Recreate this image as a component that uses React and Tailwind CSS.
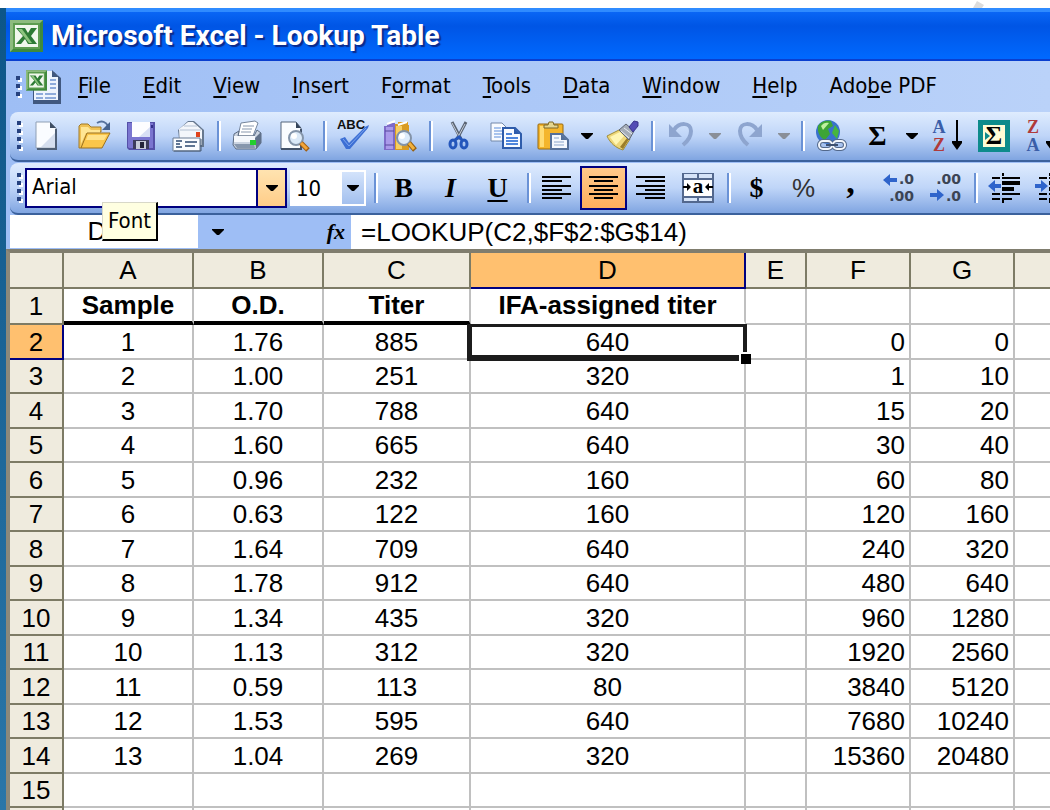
import React from 'react';
import clsx from 'clsx';

const menus = [
    ['', 'F', 'ile'],
    ['', 'E', 'dit'],
    ['', 'V', 'iew'],
    ['', 'I', 'nsert'],
    ['F', 'o', 'rmat'],
    ['', 'T', 'ools'],
    ['', 'D', 'ata'],
    ['', 'W', 'indow'],
    ['', 'H', 'elp'],
    ['Ado', 'b', 'e PDF'],
];

const columns = [
    { id: 'A', width: 'w-[130px]' },
    { id: 'B', width: 'w-[130px]' },
    { id: 'C', width: 'w-[147px]' },
    { id: 'D', width: 'w-[275px]' },
    { id: 'E', width: 'w-[61px]' },
    { id: 'F', width: 'w-[104px]' },
    { id: 'G', width: 'w-[104px]' },
    { id: '', width: '' },
];

const rows = [
    ['Sample', 'O.D.', 'Titer', 'IFA-assigned titer', '', '', '', ''],
    ['1', '1.76', '885', '640', '', '0', '0', ''],
    ['2', '1.00', '251', '320', '', '1', '10', ''],
    ['3', '1.70', '788', '640', '', '15', '20', ''],
    ['4', '1.60', '665', '640', '', '30', '40', ''],
    ['5', '0.96', '232', '160', '', '60', '80', ''],
    ['6', '0.63', '122', '160', '', '120', '160', ''],
    ['7', '1.64', '709', '640', '', '240', '320', ''],
    ['8', '1.78', '912', '640', '', '480', '640', ''],
    ['9', '1.34', '435', '320', '', '960', '1280', ''],
    ['10', '1.13', '312', '320', '', '1920', '2560', ''],
    ['11', '0.59', '113', '80', '', '3840', '5120', ''],
    ['12', '1.53', '595', '640', '', '7680', '10240', ''],
    ['13', '1.04', '269', '320', '', '15360', '20480', ''],
    ['', '', '', '', '', '', '', ''],
    ['', '', '', '', '', '', '', ''],
];

const Icon = ({ children }) => (
    <svg viewBox="0 0 32 32" className="h-8 w-8 shrink-0 overflow-visible" fill="none" aria-hidden="true">
        {children}
    </svg>
);

const Caret = ({ color = '#000' }) => (
    <svg viewBox="0 0 12 6" className="h-[6px] w-3 shrink-0" aria-hidden="true">
        <path d="M0 0h12v1L7 6H5L0 1z" fill={color} />
    </svg>
);

// The X mark shared by the title bar and workbook icons
const ExcelMark = () => (
    <>
        <rect width="33" height="32" fill="#3f8a3c" />
        <path d="M0 0h33l-3 3H3v26l-3 3z" fill="#8dbb7e" />
        <rect x="3" y="3" width="27" height="26" fill="#5d9c50" />
        <rect x="5" y="5" width="23" height="22" fill="#f0f7ec" />
        <path d="M6 8h9l3 5 3-5h6l-6 8 6 8h-9l-3-5-4 5H6l7-8z" fill="#2d7a35" />
        <path d="M8 9h4l10 14h-3z" fill="#8cc47e" />
    </>
);

const NewIcon = () => (
    <Icon>
        <path d="M6 3h14l6 6v21H6z" fill="#55657a" />
        <path d="M5 2h14l6 6v20H5z" fill="#fafcff" stroke="#8f9fb5" />
        <path d="M19 2l6 6h-6z" fill="#3f4e63" />
        <path d="M10 27l14-14v14z" fill="#d5deee" />
        <path d="M25 9v20H6" stroke="#4e5e75" strokeWidth="2" />
    </Icon>
);

const OpenIcon = () => (
    <Icon>
        <path d="M1 28V6l2-2h7l3 3h10v5h-3L3 28z" fill="#f0c256" stroke="#a17a28" />
        <path d="M3 7h7l3 3h9v3H8L3 24z" fill="#ffe694" />
        <path d="M9 13h23l-8 15H3z" fill="#fbc64a" stroke="#9b711f" />
        <path d="M10 15h19l-3 5H8z" fill="#ffe28a" />
        <path d="M19 3c5-3 9-1 11 3" stroke="#55719d" strokeWidth="2" />
        <path d="M32 2v8h-8z" fill="#45628f" />
    </Icon>
);

const SaveIcon = () => (
    <Icon>
        <path d="M2 2h28v28H4l-2-2z" fill="#5450a8" />
        <path d="M3 3h25v25H4l-1-1z" fill="#7a75d0" />
        <path d="M7 2h18v15H7z" fill="#fdfdff" />
        <path d="M14 17L25 7v10z" fill="#d8dff5" />
        <rect x="8" y="20" width="16" height="9" fill="#3d3b5c" />
        <rect x="11" y="21" width="10" height="8" fill="#c7cad8" />
        <rect x="15" y="22" width="4" height="6" fill="#24233a" />
        <rect x="26" y="5" width="2" height="3" fill="#34308a" />
    </Icon>
);

const MailIcon = () => (
    <Icon>
        <path d="M6 10L16 1h6l10 9v17H8z" fill="#66788f" />
        <path d="M7 9l9-7h5l9 8v15H8z" fill="#f3f6fb" />
        <path d="M8 10h21M12 6h13" stroke="#b4c1d3" />
        <rect x="24" y="12" width="4" height="5" fill="#e0431c" />
        <path d="M1 18h27v13H1z" fill="#fafcff" stroke="#6a7c95" />
        <path d="M4 21h6M4 24h4M4 27h6M13 22h12M13 26h10" stroke="#5f7594" strokeWidth="2" />
        <path d="M2 31h27V19" stroke="#465a74" />
    </Icon>
);

const PrintIcon = () => (
    <Icon>
        <path d="M10 3l14-2 3 2-5 13H7z" fill="#fff" stroke="#75859b" />
        <path d="M12 6h11M11 9h10M10 12h10" stroke="#8797ad" />
        <path d="M3 14l5-3-1 5h16l3-6 4 3v10l-5 6H5l-3-4z" fill="#cbd4e1" stroke="#5c6c82" />
        <path d="M3 16h21v6H3z" fill="#f5f8fc" />
        <path d="M3 24h20l1 4H6z" fill="#8797ad" />
        <path d="M24 18l6-6v11l-5 6z" fill="#60718a" />
        <rect x="19" y="20" width="6" height="5" fill="#22ce2d" />
    </Icon>
);

const PreviewIcon = () => (
    <Icon>
        <path d="M3 2h15l5 6v21H3z" fill="#fafcff" stroke="#54657d" />
        <path d="M18 2l5 6h-5z" fill="#35445a" />
        <path d="M3 29h20V9" stroke="#44536a" strokeWidth="2" />
        <circle cx="18" cy="18" r="7" fill="#dbe9f8" stroke="#8595aa" strokeWidth="2" />
        <circle cx="16" cy="16" r="3" fill="#fff" />
        <path d="M23 23l7 7" stroke="#a15f13" strokeWidth="5" />
        <path d="M23 23l6 6" stroke="#f2a43a" strokeWidth="3" />
    </Icon>
);

const SpellingIcon = () => (
    <Icon>
        <text x="14" y="9" textAnchor="middle" fontFamily="Liberation Sans" fontSize="13" fontWeight="700" fill="#111">ABC</text>
        <path d="M3 19l5-2 4 6L28 7l4-2-1 3-18 21h-4z" fill="#3d6fd4" />
        <path d="M6 19l6 7L29 8" stroke="#7ca4ee" strokeWidth="1" />
    </Icon>
);

const ResearchIcon = () => (
    <Icon>
        <path d="M0 6h3V3h8v27H0z" fill="#7e6bc8" />
        <path d="M2 7h7v22H2z" fill="#aa9aea" />
        <path d="M1 11h9M1 25h9" stroke="#594a9d" />
        <path d="M11 4h3V2h10v3h1v25H11z" fill="#d99b22" />
        <path d="M12 6h6v23h-6z" fill="#f7ce62" />
        <path d="M3 4l8-3M14 5l9-3" stroke="#fff" strokeWidth="2" />
        <circle cx="20" cy="18" r="7" fill="#ddebfa" stroke="#8393a8" strokeWidth="2" />
        <circle cx="18" cy="16" r="3" fill="#fff" />
        <path d="M25 23l6 7" stroke="#96600f" strokeWidth="5" />
        <path d="M25 23l5 6" stroke="#f2b13d" strokeWidth="3" />
    </Icon>
);

const CutIcon = () => (
    <Icon>
        <path d="M9 2l9 17M23 2l-9 17" stroke="#5a6473" strokeWidth="3" />
        <path d="M9 3l8 15M22 4l-7 13" stroke="#c4ccd8" strokeWidth="1" />
        <ellipse cx="10" cy="24" rx="3" ry="4" stroke="#2456bb" strokeWidth="3" />
        <ellipse cx="21" cy="24" rx="3" ry="4" stroke="#2456bb" strokeWidth="3" />
        <path d="M12 20l4-3 3 3" stroke="#2456bb" strokeWidth="3" />
    </Icon>
);

const CopyIcon = () => (
    <Icon>
        <path d="M1 3h11l4 4v14H1z" fill="#f8fbff" stroke="#7388aa" />
        <path d="M4 8h7M4 11h9M4 14h9M4 17h7" stroke="#5b8ddb" />
        <path d="M13 8h12l6 6v14H13z" fill="#f8fbff" stroke="#2e5cab" strokeWidth="2" />
        <path d="M24 8v6h6z" fill="#2e5cab" />
        <path d="M16 14h6M16 18h12M16 21h12M16 24h12" stroke="#4f86dc" strokeWidth="2" />
    </Icon>
);

const PasteIcon = () => (
    <Icon>
        <rect x="1" y="4" width="25" height="25" rx="1" fill="#f4b52c" stroke="#97690f" />
        <path d="M3 6h4v21H3z" fill="#ffdb72" />
        <path d="M7 8V5h4l1-3h4l1 3h4v3z" fill="#e5d68f" stroke="#7d692c" />
        <path d="M14 14h11l6 6v9H14z" fill="#f4f8fd" stroke="#54709a" strokeWidth="2" />
        <path d="M24 14v6h6z" fill="#54709a" />
        <path d="M17 18h5M17 22h10M17 25h10" stroke="#8aa5cb" />
    </Icon>
);

const BrushIcon = () => (
    <Icon>
        <path d="M1 16l12-6 11 9-7 11C10 28 4 23 1 16z" fill="#eed77a" stroke="#a18d38" />
        <path d="M4 17l10-5 4 4-8 9z" fill="#fff6b4" />
        <path d="M17 29l-3-2 7-9 2 1z" fill="#9b7d28" />
        <path d="M13 10l7-6 8 7-5 9z" fill="#a5adb8" stroke="#5d6673" />
        <path d="M15 11l8 7M18 8l8 6" stroke="#e8ecf2" />
        <path d="M23 7l5-6 4 1v4l-5 6z" fill="#524cb5" stroke="#37338a" />
    </Icon>
);

const UndoIcon = ({ flip }) => (
    <svg viewBox="0 0 32 32" className={clsx('h-8 w-8 shrink-0', flip && '-scale-x-100')} fill="none" aria-hidden="true">
        <path d="M9 10c5-8 17-8 17 1 0 5-3 10-8 14" stroke="#8ea5cf" strokeWidth="4" />
        <path d="M4 4v13h13z" fill="#8ea5cf" />
    </svg>
);

const LinkIcon = () => (
    <Icon>
        <circle cx="13" cy="12" r="12" fill="#3a72cc" />
        <path d="M3 6c3-5 8-6 13-5l2 5-5 3 2 5-5 6c-5-2-8-8-7-14z" fill="#3da436" />
        <path d="M20 5l4 6-2 8-5-6z" fill="#47b63d" />
        <path d="M6 6c2-3 5-4 8-3l-6 7z" fill="#c0f0a0" />
        <rect x="4" y="21" width="13" height="8" rx="4" stroke="#53688a" strokeWidth="4" />
        <rect x="18" y="21" width="12" height="8" rx="4" stroke="#53688a" strokeWidth="4" />
        <rect x="4" y="21" width="13" height="8" rx="4" stroke="#f2f6fc" strokeWidth="2" />
        <rect x="18" y="21" width="12" height="8" rx="4" stroke="#f2f6fc" strokeWidth="2" />
        <path d="M11 25h12" stroke="#3d5070" strokeWidth="2" />
    </Icon>
);

const SortIcon = ({ first, second, firstColor, secondColor }) => (
    <Icon>
        <text x="8" y="13" textAnchor="middle" fontFamily="Liberation Serif" fontSize="18" fontWeight="700" fill={firstColor}>{first}</text>
        <text x="8" y="31" textAnchor="middle" fontFamily="Liberation Serif" fontSize="18" fontWeight="700" fill={secondColor}>{second}</text>
        <path d="M26 0v26" stroke="#000" strokeWidth="2" />
        <path d="M21 21h10v2l-5 7-5-7z" fill="#000" />
    </Icon>
);

const SubtotalIcon = () => (
    <Icon>
        <rect width="32" height="32" fill="#0d8b8b" />
        <rect x="5" y="5" width="22" height="22" fill="#fffbd5" />
        <text x="16" y="24" textAnchor="middle" fontFamily="Liberation Serif" fontSize="25" fontWeight="700" fill="#000">Σ</text>
        <path d="M7 12l5 4-5 4z" fill="#0d8b8b" />
    </Icon>
);

const AlignIcon = ({ d }) => (
    <Icon>
        <path d={d} stroke="#000" strokeWidth="2" />
    </Icon>
);

const MergeIcon = () => (
    <Icon>
        <rect x="0" y="1" width="32" height="30" fill="#53688e" />
        <path d="M2 2h13v4H2zM17 2h13v4H17zM2 26h13v3H2zM17 26h13v3H17z" fill="#d5e3f8" />
        <rect x="2" y="8" width="28" height="16" fill="#fff" />
        <text x="16" y="21" textAnchor="middle" fontFamily="Liberation Serif" fontSize="21" fontWeight="700" fill="#000">a</text>
        <path d="M1 15h7M24 15h7" stroke="#000" strokeWidth="2" />
        <path d="M5 11l4 4-4 4zM27 11l-4 4 4 4z" fill="#000" />
    </Icon>
);

const DecimalIcon = ({ increase }) => (
    <Icon>
        <text x="32" y="12" textAnchor="end" fontFamily="DejaVu Sans" fontSize="14" fontWeight="700" fill="#3b4454">{increase ? '.0' : '.00'}</text>
        <text x="32" y="29" textAnchor="end" fontFamily="DejaVu Sans" fontSize="14" fontWeight="700" fill="#3b4454">{increase ? '.00' : '.0'}</text>
        <path d={increase ? 'M1 8l7-6v4h7v4H8v4z' : 'M15 23l-7-6v4H1v4h7v4z'} fill="#2f64cb" />
    </Icon>
);

const IndentIcon = ({ increase }) => (
    <Icon>
        <path d="M4 6h8M4 22h8M4 27h8M15 1v3M15 28v3" stroke="#000" strokeWidth="2" />
        <path d="M14 6h18M14 22h18M14 27h10" stroke="#000" strokeWidth="2" />
        <path d="M14 11h18M14 17h12" stroke="#000" strokeWidth="4" />
        <path d={increase ? 'M13 14L6 8v4H0v4h6v4z' : 'M0 14l7-6v4h6v4H7v4z'} fill="#2f64cb" />
    </Icon>
);

const Grip = () => (
    <svg viewBox="0 0 6 32" className="h-8 w-[6px] shrink-0" aria-hidden="true">
        <path d="M2 3h4v4H2zM2 11h4v4H2zM2 19h4v4H2zM2 27h4v4H2z" fill="#fff" />
        <path d="M0 1h4v4H0zM0 9h4v4H0zM0 17h4v4H0zM0 25h4v4H0z" fill="#27427f" />
    </svg>
);

const Separator = () => (
    <div className="flex w-3 shrink-0 justify-center pl-1">
        <div className="h-[30px] w-1 border-r-2 border-l-2 border-r-white border-l-[#6a92d6]" />
    </div>
);

const ToolButton = ({ label, active, children }) => (
    <button
        type="button"
        aria-label={label}
        className={clsx(
            'flex w-[47px] shrink-0 items-center justify-center',
            active ? 'h-11 border-2 border-[#000080] bg-linear-to-b from-[#ffc98a] to-[#ffae5c]' : 'h-10'
        )}
    >
        {children}
    </button>
);

const CaretButton = ({ label, color }) => (
    <button type="button" aria-label={label} className="flex h-10 w-[22px] shrink-0 items-center justify-center">
        <Caret color={color} />
    </button>
);

const StandardToolbar = () => (
    <div className="ml-1 flex h-[50px] items-center overflow-hidden rounded-l-lg border-b-2 border-[#3b619c] bg-linear-to-b from-[#dfecfe] via-[#bfd5f8] to-[#80a5e1] pl-[7px]">
        <div className="flex w-[6px] shrink-0"><Grip /></div>
        <ToolButton label="New"><NewIcon /></ToolButton>
        <ToolButton label="Open"><OpenIcon /></ToolButton>
        <ToolButton label="Save"><SaveIcon /></ToolButton>
        <ToolButton label="E-mail"><MailIcon /></ToolButton>
        <Separator />
        <ToolButton label="Print"><PrintIcon /></ToolButton>
        <ToolButton label="Print Preview"><PreviewIcon /></ToolButton>
        <Separator />
        <ToolButton label="Spelling"><SpellingIcon /></ToolButton>
        <ToolButton label="Research"><ResearchIcon /></ToolButton>
        <Separator />
        <ToolButton label="Cut"><CutIcon /></ToolButton>
        <ToolButton label="Copy"><CopyIcon /></ToolButton>
        <ToolButton label="Paste"><PasteIcon /></ToolButton>
        <CaretButton label="Paste options" />
        <ToolButton label="Format Painter"><BrushIcon /></ToolButton>
        <Separator />
        <ToolButton label="Undo"><UndoIcon /></ToolButton>
        <CaretButton label="Undo history" color="#8a8f98" />
        <ToolButton label="Redo"><UndoIcon flip /></ToolButton>
        <CaretButton label="Redo history" color="#8a8f98" />
        <Separator />
        <ToolButton label="Insert Hyperlink"><LinkIcon /></ToolButton>
        <ToolButton label="AutoSum"><span className="font-['Liberation_Serif',serif] text-[28px] leading-8 font-bold">Σ</span></ToolButton>
        <CaretButton label="AutoSum options" />
        <ToolButton label="Sort Ascending"><SortIcon first="A" second="Z" firstColor="#3a5ea8" secondColor="#b03a3a" /></ToolButton>
        <ToolButton label="Subtotals"><SubtotalIcon /></ToolButton>
        <ToolButton label="Sort Descending"><SortIcon first="Z" second="A" firstColor="#b03a3a" secondColor="#3a5ea8" /></ToolButton>
    </div>
);

const FormattingToolbar = () => (
    <div className="mt-px ml-1 flex h-[52px] items-center rounded-l-lg border-b-2 border-[#3b619c] bg-linear-to-b from-[#dfecfe] via-[#bfd5f8] to-[#80a5e1] pl-[7px]">
        <div className="flex w-2 shrink-0"><Grip /></div>
        <div className="relative flex h-10 w-[262px] shrink-0 border-2 border-[#000080] bg-white">
            <select aria-label="Font" className="min-w-0 flex-1 appearance-none pb-1 pl-[5px] text-[22px] outline-none">
                <option>Arial</option>
            </select>
            <div className="pointer-events-none flex w-[29px] items-center justify-center border-l-2 border-[#000080] bg-linear-to-b from-[#ffe3b0] to-[#ffcd88]">
                <Caret />
            </div>
            <div role="tooltip" className="absolute top-8 left-[75px] z-20 border-t border-r-2 border-b-2 border-l border-t-[#d8d8c8] border-r-black border-b-black border-l-[#d8d8c8] bg-[#ffffe1] px-[5px] text-[22px] leading-9">
                Font
            </div>
        </div>
        <div className="mr-0.5 ml-[3px] flex h-9 w-[76px] shrink-0 border-2 border-white bg-white">
            <select aria-label="Font Size" className="min-w-0 flex-1 appearance-none pb-1 pl-1 text-[22px] outline-none">
                <option>10</option>
            </select>
            <div className="pointer-events-none flex w-[22px] items-center justify-center bg-linear-to-b from-[#d3e3fb] to-[#a3c0ee]">
                <Caret />
            </div>
        </div>
        <Separator />
        <ToolButton label="Bold"><span className="font-['Liberation_Serif',serif] text-[28px] leading-8 font-bold">B</span></ToolButton>
        <ToolButton label="Italic"><span className="font-['Liberation_Serif',serif] text-[28px] leading-8 font-bold italic">I</span></ToolButton>
        <ToolButton label="Underline"><span className="font-['Liberation_Serif',serif] text-[28px] leading-8 font-bold underline decoration-2 underline-offset-3">U</span></ToolButton>
        <Separator />
        <ToolButton label="Align Left"><AlignIcon d="M1 5h29M1 9h20M1 14h29M1 18h20M1 22h29M1 26h20" /></ToolButton>
        <ToolButton label="Center" active><AlignIcon d="M1 5h29M6 9h19M1 14h29M6 18h19M1 22h29M6 26h19" /></ToolButton>
        <ToolButton label="Align Right"><AlignIcon d="M1 5h29M10 9h20M1 14h29M10 18h20M1 22h29M10 26h20" /></ToolButton>
        <ToolButton label="Merge and Center"><MergeIcon /></ToolButton>
        <Separator />
        <ToolButton label="Currency Style"><span className="font-['Liberation_Serif',serif] text-[28px] leading-8 font-bold">$</span></ToolButton>
        <ToolButton label="Percent Style"><span className="font-['Liberation_Sans',sans-serif] text-[26px] leading-8 text-[#333]">%</span></ToolButton>
        <ToolButton label="Comma Style"><span className="pb-3 font-['Liberation_Serif',serif] text-[34px] leading-8 font-bold">,</span></ToolButton>
        <ToolButton label="Increase Decimal"><DecimalIcon increase /></ToolButton>
        <ToolButton label="Decrease Decimal"><DecimalIcon /></ToolButton>
        <Separator />
        <ToolButton label="Decrease Indent"><IndentIcon /></ToolButton>
        <ToolButton label="Increase Indent"><IndentIcon increase /></ToolButton>
    </div>
);

const FormulaBar = () => (
    <div className="ml-1 flex h-[34px] font-['Liberation_Sans',Arial,sans-serif] text-[26px]">
        <input aria-label="Name Box" defaultValue="D2" className="mb-px w-[188px] shrink-0 bg-white text-center outline-none" />
        <button type="button" aria-label="Name list" className="flex w-10 shrink-0 items-center justify-center">
            <Caret />
        </button>
        <div className="flex w-[113px] shrink-0 items-center justify-end pr-[6px]">
            <button type="button" aria-label="Insert Function" className="font-['Liberation_Serif',serif] text-[22px] leading-8 font-bold italic">fx</button>
        </div>
        <input aria-label="Formula" defaultValue="=LOOKUP(C2,$F$2:$G$14)" className="min-w-0 flex-1 bg-white pl-[10px] outline-none" />
    </div>
);

const SelectionFrame = () => (
    <>
        <div className="pointer-events-none absolute -top-px -right-[3px] -bottom-[3px] -left-1 border-t-3 border-r-4 border-b-6 border-l-5 border-[#1c1c1c]" />
        <div className="pointer-events-none absolute -right-[7px] -bottom-[6px] h-3 w-3 border-t-2 border-l-2 border-white bg-black" />
    </>
);

const Sheet = () => (
    <div className="border-t-4 border-l-4 border-t-[#807d6e] border-l-[#8b887a] bg-white">
        <table className="w-full table-fixed border-separate border-spacing-0 font-['Liberation_Sans',Arial,sans-serif] text-[26px] leading-8">
            <thead>
                <tr className="h-9">
                    <th className="w-[54px] border-r-2 border-b-2 border-[#7d7b65] bg-[#efebde] p-0" />
                    {columns.map((col, i) => (
                        <th
                            key={i}
                            scope="col"
                            className={clsx(
                                'border-r-2 border-b-2 p-0 text-center font-normal last:border-r-0',
                                col.width,
                                col.id === 'D' ? 'border-[#000080] bg-[#ffc06f]' : 'border-[#7d7b65] bg-[#efebde]'
                            )}
                        >
                            {col.id}
                        </th>
                    ))}
                </tr>
            </thead>
            <tbody>
                {rows.map((row, r) => (
                    <tr key={r} className="h-[34px] first:h-9 even:h-[35px]">
                        <th
                            scope="row"
                            className={clsx(
                                'border-r-2 border-b-2 p-0 text-center font-normal',
                                r === 1 ? 'border-[#000080] bg-[#ffc06f]' : 'border-[#7d7b65] bg-[#efebde]'
                            )}
                        >
                            {r + 1}
                        </th>
                        {row.map((value, c) => (
                            <td
                                key={c}
                                className={clsx(
                                    'border-r-2 border-r-[#c0c0c0] py-0 last:border-r-0',
                                    r === 0 && 'font-bold',
                                    r === 0 && c < 4 ? 'border-b-4' : 'border-b-2',
                                    r === 0 && c < 3 && 'border-b-black',
                                    r === 0 && c === 3 && 'border-b-white',
                                    (r > 0 || c > 3) && 'border-b-[#c0c0c0]',
                                    c > 4 ? 'pr-1 pl-0 text-right' : 'px-0 text-center',
                                    r === 1 && c === 3 && 'relative z-10'
                                )}
                            >
                                {value}
                                {r === 1 && c === 3 && <SelectionFrame />}
                            </td>
                        ))}
                    </tr>
                ))}
            </tbody>
        </table>
    </div>
);

export default function App() {
    return (
        <div className="flex h-screen flex-col overflow-hidden bg-white font-['DejaVu_Sans_Condensed','DejaVu_Sans',sans-serif] text-black">
            <div className="flex h-2 shrink-0 justify-end pr-[66px]">
                <svg viewBox="0 0 12 8" className="h-2 w-3" aria-hidden="true">
                    <path d="M5 1l7 4-2 3H1z" fill="#dcdcdc" />
                </svg>
            </div>
            <div className="flex min-h-0 flex-1 bg-linear-to-b from-[#0d5688] to-[#2a76a8] pl-[6px]">
                <div className="min-w-0 flex-1 bg-[#9ebef5]">
                    <header className="flex h-[53px] items-center gap-2 border-t-4 border-b-2 border-t-[#2f8bff] border-b-[#0a3fcf] bg-linear-to-b from-[#0a66f5] via-[#0055e5] via-30% to-[#0069ff] pl-1">
                        <svg viewBox="0 0 33 32" className="h-8 w-[33px] shrink-0" aria-hidden="true">
                            <ExcelMark />
                        </svg>
                        <h1 className="font-[Roboto,sans-serif] text-[28px] leading-9 font-bold whitespace-nowrap text-white [text-shadow:2px_2px_1px_#0a2a8c]">
                            Microsoft Excel - Lookup Table
                        </h1>
                    </header>
                    <nav className="flex h-[51px] items-center bg-linear-to-r from-[#9ebef5] to-[#bad2f9] pl-[10px]">
                        <svg viewBox="0 0 6 24" className="h-6 w-[6px] shrink-0" aria-hidden="true">
                            <path d="M2 3h4v4H2zM2 11h4v4H2zM2 19h4v4H2z" fill="#fff" />
                            <path d="M0 1h4v4H0zM0 9h4v4H0zM0 17h4v4H0z" fill="#27427f" />
                        </svg>
                        <svg viewBox="0 0 36 34" className="ml-1 h-[34px] w-9 shrink-0" fill="none" aria-hidden="true">
                            <path d="M7 2h21l7 6v26H7z" fill="#41587f" />
                            <path d="M8 1h18l6 5v24H8z" fill="#eef4fd" />
                            <path d="M26 0v7h7z" fill="#41587f" />
                            <path d="M24 10h6M24 14h6M24 18h6M10 24h7M19 24h11M10 28h7M19 28h11" stroke="#8eabdb" strokeWidth="2" />
                            <svg width="21" height="21" viewBox="0 0 33 32">
                                <ExcelMark />
                            </svg>
                        </svg>
                        <ul className="flex gap-8 pb-0.5 pl-4 text-[22px] leading-8 whitespace-nowrap">
                            {menus.map(([before, key, after]) => (
                                <li key={before + key + after}>
                                    <button type="button">
                                        {before}
                                        <span className="underline decoration-2 underline-offset-3">{key}</span>
                                        {after}
                                    </button>
                                </li>
                            ))}
                        </ul>
                    </nav>
                    <StandardToolbar />
                    <FormattingToolbar />
                    <FormulaBar />
                    <Sheet />
                </div>
            </div>
        </div>
    );
}
